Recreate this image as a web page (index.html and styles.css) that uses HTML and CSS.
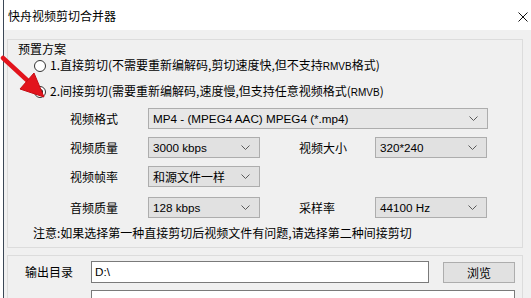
FILE: index.html
```html
<!DOCTYPE html>
<html>
<head>
    <title>快舟视频剪切合并器</title>
    <meta charset="utf-8">
    <link rel="stylesheet" href="styles.css">
</head>
<body>
    <div class="window">
        <div class="titlebar">
            <span class="title">快舟视频剪切合并器</span>
            <svg class="close" width="10" height="10" viewBox="0 0 10 10">
                <path d="M0.5 0.5 L9.5 9.5 M9.5 0.5 L0.5 9.5" stroke="#111" stroke-width="1"/>
            </svg>
        </div>

        <div class="client">
            <div class="group preset">
                <div class="legend">预置方案</div>

                <div class="radio">
                    <span class="circle"></span>
                    <span>1.直接剪切(不需要重新编解码,剪切速度快,但不支持<span class="small">RMVB</span>格式)</span>
                </div>
                <div class="radio second">
                    <span class="circle checked"></span>
                    <span>2.间接剪切(需要重新编解码,速度慢,但支持任意视频格式(<span class="small">RMVB</span>)</span>
                </div>

                <div class="rows">
                    <div class="row">
                        <span class="lbl">视频格式</span>
                        <div class="select wide light">
                            <span>MP4 - (MPEG4 AAC) MPEG4 (*.mp4)</span>
                            <svg width="9" height="5" viewBox="0 0 9 5"><polyline points="0.5,0.5 4.5,4.5 8.5,0.5" fill="none" stroke="#5a5a5a"/></svg>
                        </div>
                    </div>
                    <div class="row">
                        <span class="lbl">视频质量</span>
                        <div class="select">
                            <span>3000 kbps</span>
                            <svg width="9" height="5" viewBox="0 0 9 5"><polyline points="0.5,0.5 4.5,4.5 8.5,0.5" fill="none" stroke="#5a5a5a"/></svg>
                        </div>
                        <span class="lbl right">视频大小</span>
                        <div class="select">
                            <span>320*240</span>
                            <svg width="9" height="5" viewBox="0 0 9 5"><polyline points="0.5,0.5 4.5,4.5 8.5,0.5" fill="none" stroke="#5a5a5a"/></svg>
                        </div>
                    </div>
                    <div class="row">
                        <span class="lbl">视频帧率</span>
                        <div class="select">
                            <span class="cjk">和源文件一样</span>
                            <svg width="9" height="5" viewBox="0 0 9 5"><polyline points="0.5,0.5 4.5,4.5 8.5,0.5" fill="none" stroke="#5a5a5a"/></svg>
                        </div>
                    </div>
                    <div class="row audio">
                        <span class="lbl">音频质量</span>
                        <div class="select">
                            <span>128 kbps</span>
                            <svg width="9" height="5" viewBox="0 0 9 5"><polyline points="0.5,0.5 4.5,4.5 8.5,0.5" fill="none" stroke="#5a5a5a"/></svg>
                        </div>
                        <span class="lbl right">采样率</span>
                        <div class="select">
                            <span>44100 Hz</span>
                            <svg width="9" height="5" viewBox="0 0 9 5"><polyline points="0.5,0.5 4.5,4.5 8.5,0.5" fill="none" stroke="#5a5a5a"/></svg>
                        </div>
                    </div>
                </div>

                <p class="note">注意:如果选择第一种直接剪切后视频文件有问题,请选择第二种间接剪切</p>
            </div>

            <div class="group output">
                <div class="out-row">
                    <span class="out-lbl">输出目录</span>
                    <div class="textbox">D:\</div>
                    <div class="button">浏览</div>
                </div>
                <div class="out-row">
                    <span class="out-lbl"></span>
                    <div class="textbox full"></div>
                </div>
            </div>
        </div>
    </div>

    <!-- red pointer drawn over the dialog -->
    <svg class="arrow" width="60" height="110" viewBox="0 0 60 110">
        <line x1="3" y1="58" x2="28" y2="81" stroke="#e2141c" stroke-width="4.5" stroke-linecap="round"/>
        <polygon points="20,89 34,73 44,97" fill="#e2141c" stroke="#c40d14" stroke-width="1" stroke-linejoin="round"/>
    </svg>
</body>
</html>
```

FILE: styles.css
```css
body {
    margin: 0;
    background-color: #fff;
    font-family: "Noto Sans CJK SC", sans-serif;
    font-size: 12px;
    line-height: 16px;
    color: #000;
}

.window {
    margin-left: 3px;
    border-left: 1px solid #3b4756;
    height: 298px;
    background-color: #f0f0f0;
    overflow: hidden;
}

.titlebar {
    height: 30px;
    background-color: #fff;
    display: flex;
    align-items: center;
    justify-content: space-between;
    padding: 0 3px 0 4px;
    box-sizing: border-box;
}

.title {
    line-height: 16px;
    padding-top: 1px;
}

.close {
    margin-top: 3px;
}

.client {
    padding: 9px 8px 0 3px;
}

.group {
    border: 1px solid #dcdcdc;
    box-sizing: border-box;
}

.preset {
    height: 209px;
}

.legend {
    height: 17px;
    line-height: 17px;
    padding-left: 10px;
}

.radio {
    display: flex;
    align-items: center;
    height: 18px;
    padding-left: 26px;
}

.radio.second {
    margin-top: 8px;
}

.circle {
    width: 10px;
    height: 10px;
    border: 1px solid #333;
    border-radius: 50%;
    background-color: #fff;
    margin-right: 4px;
    position: relative;
}

.circle.checked::after {
    content: "";
    position: absolute;
    left: 2px;
    top: 2px;
    width: 6px;
    height: 6px;
    border-radius: 50%;
    background-color: #222;
}

.small {
    font-family: "Liberation Sans", sans-serif;
    font-size: 10px;
}

.rows {
    display: flex;
    flex-direction: column;
    gap: 8px;
    margin-top: 7px;
}

.row {
    display: flex;
    align-items: center;
    height: 21px;
    padding-left: 62px;
}

.row.audio {
    margin-top: 2px;
}

.lbl {
    width: 78px;
}

.lbl.right {
    width: 76px;
    margin-left: 39px;
}

.select {
    display: flex;
    align-items: center;
    justify-content: space-between;
    width: 112px;
    height: 21px;
    padding: 0 9px 0 4px;
    box-sizing: border-box;
    border: 1px solid #adadad;
    background-color: #e1e1e1;
    font-family: "Liberation Sans", sans-serif;
    font-size: 11.7px;
}

.select .cjk {
    font-family: "Noto Sans CJK SC", sans-serif;
    font-size: 12px;
}

.select.wide {
    width: 340px;
}

.select.light {
    background-color: #e7e7e7;
}

.note {
    margin: 7px 0 0 0;
    padding-left: 25px;
    line-height: 16px;
}

.output {
    margin-top: 7px;
    padding-top: 5px;
    height: 60px;
}

.out-row {
    display: flex;
    align-items: center;
    padding-left: 17px;
    margin-bottom: 7px;
}

.out-lbl {
    width: 66px;
}

.textbox {
    width: 338px;
    height: 22px;
    box-sizing: border-box;
    border: 1px solid #7a7a7a;
    background-color: #fff;
    padding: 2px 3px;
    line-height: 16px;
    font-family: "Liberation Sans", sans-serif;
    font-size: 11.7px;
}

.textbox.full {
    width: 424px;
}

.button {
    width: 72px;
    height: 21px;
    margin-left: 14px;
    box-sizing: border-box;
    border: 1px solid #adadad;
    background-color: #e1e1e1;
    text-align: center;
    line-height: 19px;
}

.arrow {
    position: absolute;
    left: 0;
    top: 0;
}
```
